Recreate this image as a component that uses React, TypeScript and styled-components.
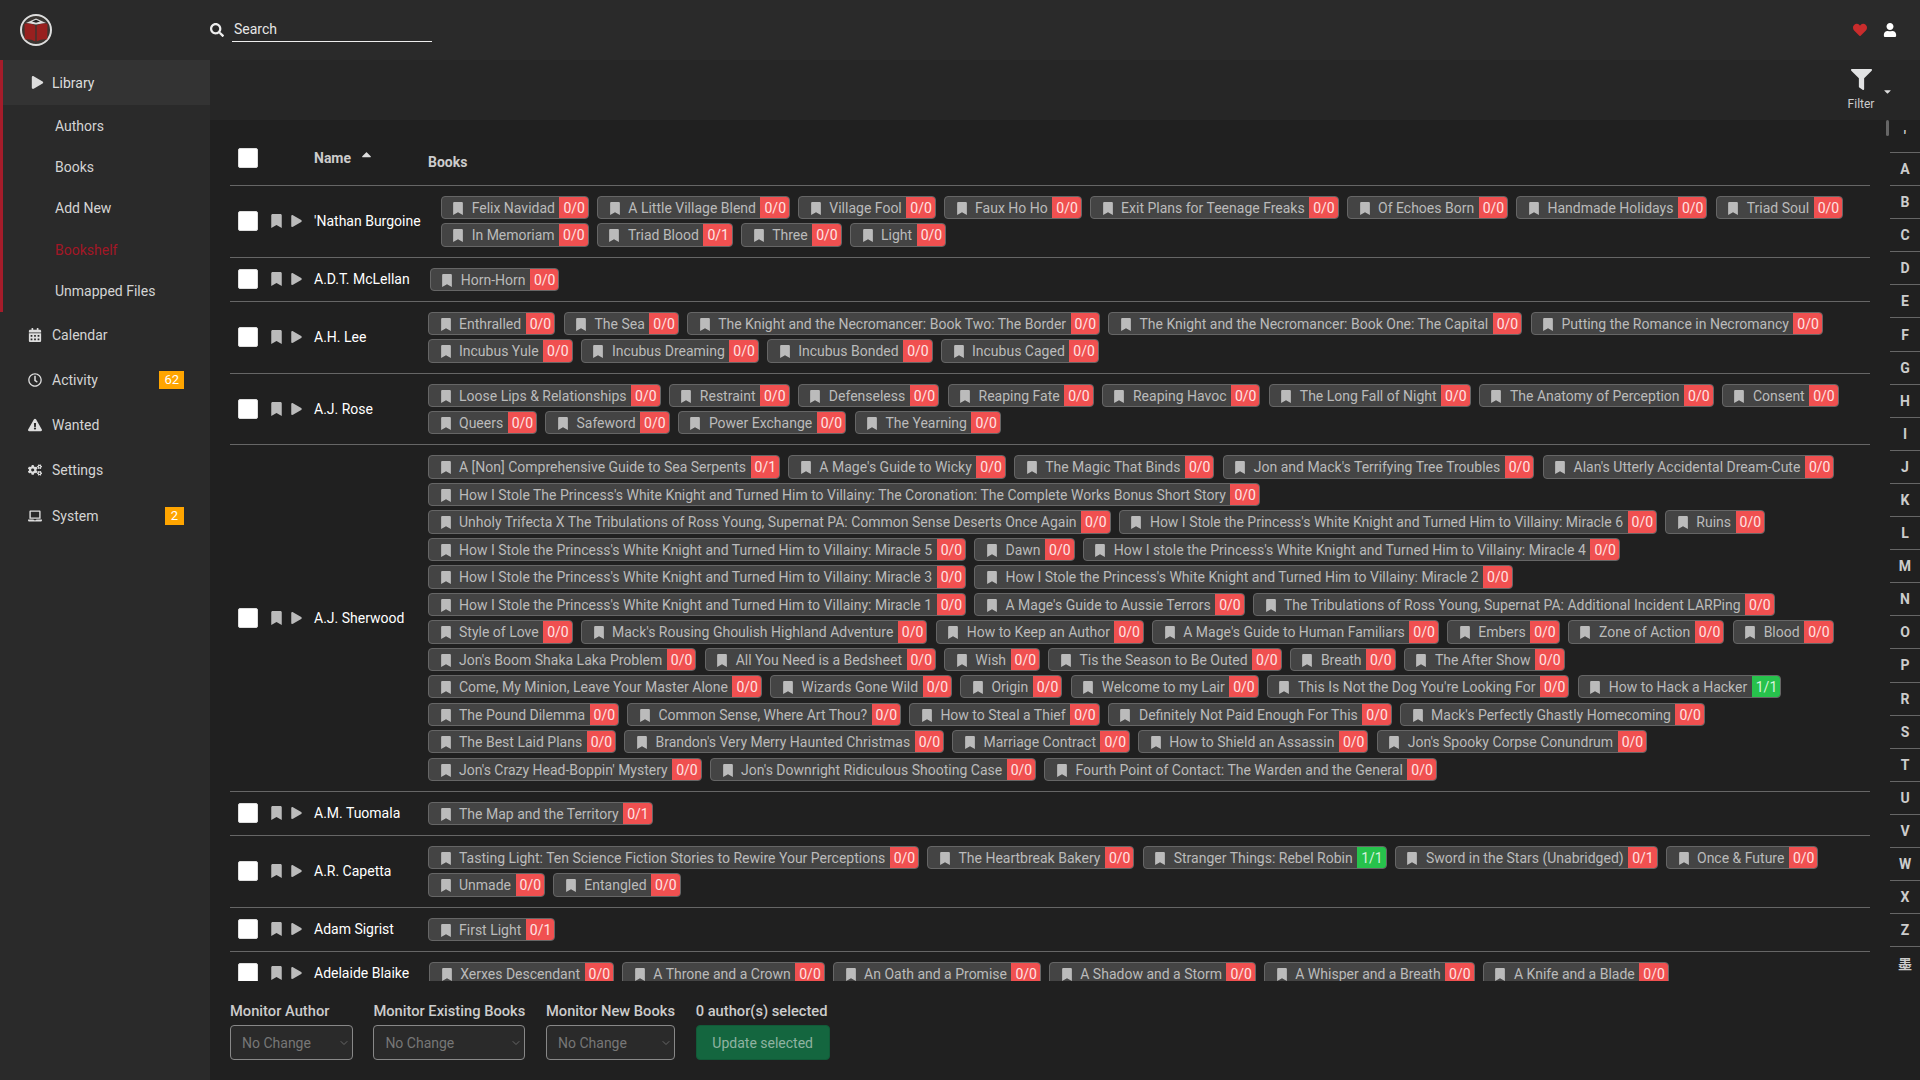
import React from 'react';
import styled, { createGlobalStyle } from 'styled-components';
import {
  FaBookmark, FaPlay, FaCalendarAlt, FaRegClock, FaExclamationTriangle, FaCogs, FaLaptop,
  FaSearch, FaHeart, FaUser, FaFilter, FaCaretDown, FaCaretUp,
} from 'react-icons/fa';
import { ChevronDown } from 'lucide-react';

const GlobalStyle = createGlobalStyle`
  html, body { margin: 0; padding: 0; height: 100%; background: #202020; overflow: hidden; }
  * { box-sizing: border-box; }
  body { font-family: Roboto, "Noto Sans CJK SC", sans-serif; font-size: 14px; color: #ccc; }
`;

const Page = styled.div`
  width: 1920px; height: 1080px; display: flex; flex-direction: column; overflow: hidden;
`;
const Header = styled.header`
  height: 60px; flex: none; display: flex; align-items: center; background: #2a2a2a;
`;
const LogoBox = styled.div`
  width: 210px; flex: none; padding-left: 20px; display: flex; align-items: center;
`;
const SearchBox = styled.div`
  display: flex; align-items: center; color: #eee;
`;
const SearchField = styled.div`
  width: 200px; height: 24px; margin-left: 8px; padding: 0 0 0 2px; line-height: 22px;
  border-bottom: 1px solid #eee; color: #e6e6e6; font-size: 14px;
`;
const HeaderRight = styled.div`
  margin-left: auto; padding-right: 23px; display: flex; align-items: center; gap: 16px;
`;
const HeartIcon = styled(FaHeart)` color: #c92c2c; font-size: 14px; `;
const UserIcon = styled(FaUser)` color: #fff; font-size: 14px; `;

const Body = styled.div` flex: 1; display: flex; min-height: 0; `;
const Sidebar = styled.nav`
  width: 210px; flex: none; background: #2a2a2a; display: flex; flex-direction: column;
`;
const LibraryGroup = styled.div` border-left: 3px solid #a51c2a; `;
const LibraryHead = styled.div`
  height: 45px; display: flex; align-items: center; background: #333; padding-left: 28px; color: #ddd;
`;
const SubItem = styled.div<{ $active?: boolean }>`
  height: 41.4px; display: flex; align-items: center; padding-left: 52px;
  color: ${(p) => (p.$active ? '#a31726' : '#d4d4d4')};
`;
const NavItem = styled.div`
  height: 45.25px; display: flex; align-items: center; color: #d4d4d4; padding-right: 26px;
`;
const NavIcon = styled.span`
  width: 52px; flex: none; padding-left: 26px; padding-right: 9px; display: flex; justify-content: center;
  color: #ddd;
  svg { height: 14px; width: auto; flex: none; }
`;
const LibraryIcon = styled(FaPlay)` font-size: 13px; color: #ddd; margin-right: 8px; `;
const Count = styled.span`
  margin-left: auto; height: 18px; min-width: 19px; padding: 0 5px; background: #ffa500; color: #fff;
  display: flex; align-items: center; justify-content: center; font-size: 13px;
`;

const Main = styled.main` flex: 1; min-width: 0; display: flex; flex-direction: column; `;
const Toolbar = styled.div`
  height: 60px; flex: none; background: #262626; display: flex; justify-content: flex-end;
  align-items: center; padding-right: 29px;
`;
const FilterStack = styled.div`
  width: 30px; display: flex; flex-direction: column; align-items: center; color: #ddd;
`;
const FilterIcon = styled(FaFilter)` font-size: 21px; color: #e1e2e3; `;
const FilterLabel = styled.span` font-size: 12px; line-height: 14px; margin-top: 7px; color: #ccc; white-space: nowrap; `;
const Caret = styled(FaCaretDown)` width: 7px; height: 11px; margin-left: 8px; color: #ddd; margin-top: 3px; `;

const Content = styled.div` flex: 1; min-height: 0; display: flex; `;
const TablePane = styled.div`
  position: relative; flex: 1; min-width: 0; padding: 0 20px; display: flex; flex-direction: column;
`;
const Thumb = styled.div`
  position: absolute; top: 0; right: 1.5px; width: 3px; height: 16px; background: #666; border-radius: 2px;
`;
const List = styled.div` flex: 1; min-height: 0; overflow: hidden; `;
const HeadRow = styled.div`
  height: 65px; display: flex; font-weight: 700; color: #ccc; position: relative;
`;
const HeadCheck = styled.div` width: 41px; flex: none; padding: 28px 0 0 8px; `;
const HeadSpacer = styled.div` width: 43px; flex: none; `;
const NameHead = styled.div` width: 114px; flex: none; padding-top: 30px; line-height: 16px; display: flex; `;
const SortIcon = styled(FaCaretUp)` font-size: 15px; margin: -3px 0 0 8px; color: #ddd; `;
const BooksHead = styled.div` padding-top: 34px; line-height: 16px; `;
const Row = styled.div`
  display: flex; align-items: center; border-top: 1px solid #666; padding: 10px 0 9.8px;
`;
const CheckCell = styled.div` width: 41px; flex: none; padding-left: 8px; display: flex; `;
const CheckBox = styled.span`
  width: 20px; height: 20px; background: #fff; border: 1px solid #ddd; border-radius: 2px; display: block;
`;
const ActionCell = styled.div`
  width: 43px; flex: none; display: flex; align-items: center; color: #bbb;
`;
const RowBookmark = styled(FaBookmark)` font-size: 14px; width: 11px; `;
const RowPlay = styled(FaPlay)` font-size: 12px; width: 11px; margin-left: 9px; `;
const Name = styled.div`
  flex: none; min-width: 114px; padding-right: 20px; color: #fff; white-space: nowrap; line-height: 20px;
`;
const Tags = styled.div` flex: 1; min-width: 0; display: flex; flex-wrap: wrap; gap: 4.1px 8.3px; `;
const Tag = styled.span`
  height: 23.4px; display: inline-flex; align-items: stretch; background: #444; border: 1px solid #666;
  border-radius: 4px; overflow: hidden; color: #bbb; white-space: nowrap;
`;
const TagIcon = styled(FaBookmark)` font-size: 13px; width: 10px; margin: 5px 8.5px 0 11.5px; flex: none; `;
const TagText = styled.span` line-height: 23.2px; padding-right: 4.5px; `;
const TagCount = styled.span<{ $full?: boolean }>`
  background: ${(p) => (p.$full ? '#27c24c' : '#f05050')}; color: ${(p) => (p.$full ? '#d6f3dd' : '#ffe3e3')};
  line-height: 23.2px; padding: 0 3px 0 4px;
`;

const BulkBar = styled.div`
  height: 99px; flex: none; padding-top: 20px; display: flex; gap: 20.7px;
`;
const BulkCol = styled.div<{ $min?: number }>`
  display: flex; flex-direction: column; gap: 4px; min-width: ${(p) => p.$min ?? 0}px;
`;
const BulkLabel = styled.div` font-weight: 500; font-size: 14.7px; line-height: 20px; color: #ccc; white-space: nowrap; `;
const Select = styled.div`
  height: 35px; border: 1px solid #888; border-radius: 4px; background: #2a2a2a; color: #777;
  display: flex; align-items: center; justify-content: space-between; padding: 0 2px 0 11px;
`;
const Chevron = styled(ChevronDown)` width: 12px; height: 12px; color: #666; `;
const UpdateButton = styled.div`
  height: 35px; border: 1px solid #125a38; border-radius: 4px; background: #14663f; color: #8fb3a1;
  display: flex; align-items: center; justify-content: center;
`;

const JumpBar = styled.div` width: 30px; flex: none; display: flex; flex-direction: column; `;
const JumpItem = styled.div<{ $first?: boolean }>`
  height: ${(p) => (p.$first ? '32px' : '33.1px')}; flex: none; display: flex; align-items: center; justify-content: center;
  font-weight: 700; color: #ccc; font-size: 14px;
  border-top: ${(p) => (p.$first ? 'none' : '1px solid #666')};
`;

type B = [string, string?];
const b = (...names: (string | B)[]): B[] => names.map((n) => (typeof n === 'string' ? [n] : n));

const authors: { name: string; books: B[] }[] = [
  { name: "'Nathan Burgoine", books: b('Felix Navidad', 'A Little Village Blend', 'Village Fool', 'Faux Ho Ho', 'Exit Plans for Teenage Freaks', 'Of Echoes Born', 'Handmade Holidays', 'Triad Soul', 'In Memoriam', ['Triad Blood', '0/1'], 'Three', 'Light') },
  { name: 'A.D.T. McLellan', books: b('Horn-Horn') },
  { name: 'A.H. Lee', books: b('Enthralled', 'The Sea', 'The Knight and the Necromancer: Book Two: The Border', 'The Knight and the Necromancer: Book One: The Capital', 'Putting the Romance in Necromancy', 'Incubus Yule', 'Incubus Dreaming', 'Incubus Bonded', 'Incubus Caged') },
  { name: 'A.J. Rose', books: b('Loose Lips & Relationships', 'Restraint', 'Defenseless', 'Reaping Fate', 'Reaping Havoc', 'The Long Fall of Night', 'The Anatomy of Perception', 'Consent', 'Queers', 'Safeword', 'Power Exchange', 'The Yearning') },
  { name: 'A.J. Sherwood', books: b(
    ['A [Non] Comprehensive Guide to Sea Serpents', '0/1'], "A Mage's Guide to Wicky", 'The Magic That Binds', "Jon and Mack's Terrifying Tree Troubles", "Alan's Utterly Accidental Dream-Cute",
    "How I Stole The Princess's White Knight and Turned Him to Villainy: The Coronation: The Complete Works Bonus Short Story",
    'Unholy Trifecta X The Tribulations of Ross Young, Supernat PA: Common Sense Deserts Once Again', "How I Stole the Princess's White Knight and Turned Him to Villainy: Miracle 6", 'Ruins',
    "How I Stole the Princess's White Knight and Turned Him to Villainy: Miracle 5", 'Dawn', "How I stole the Princess's White Knight and Turned Him to Villainy: Miracle 4",
    "How I Stole the Princess's White Knight and Turned Him to Villainy: Miracle 3", "How I Stole the Princess's White Knight and Turned Him to Villainy: Miracle 2",
    "How I Stole the Princess's White Knight and Turned Him to Villainy: Miracle 1", "A Mage's Guide to Aussie Terrors", 'The Tribulations of Ross Young, Supernat PA: Additional Incident LARPing',
    'Style of Love', "Mack's Rousing Ghoulish Highland Adventure", 'How to Keep an Author', "A Mage's Guide to Human Familiars", 'Embers', 'Zone of Action', 'Blood',
    "Jon's Boom Shaka Laka Problem", 'All You Need is a Bedsheet', 'Wish', 'Tis the Season to Be Outed', 'Breath', 'The After Show',
    'Come, My Minion, Leave Your Master Alone', 'Wizards Gone Wild', 'Origin', 'Welcome to my Lair', "This Is Not the Dog You're Looking For", ['How to Hack a Hacker', '1/1'],
    'The Pound Dilemma', 'Common Sense, Where Art Thou?', 'How to Steal a Thief', 'Definitely Not Paid Enough For This', "Mack's Perfectly Ghastly Homecoming",
    'The Best Laid Plans', "Brandon's Very Merry Haunted Christmas", 'Marriage Contract', 'How to Shield an Assassin', "Jon's Spooky Corpse Conundrum",
    "Jon's Crazy Head-Boppin' Mystery", "Jon's Downright Ridiculous Shooting Case", 'Fourth Point of Contact: The Warden and the General') },
  { name: 'A.M. Tuomala', books: b(['The Map and the Territory', '0/1']) },
  { name: 'A.R. Capetta', books: b('Tasting Light: Ten Science Fiction Stories to Rewire Your Perceptions', 'The Heartbreak Bakery', ['Stranger Things: Rebel Robin', '1/1'], ['Sword in the Stars (Unabridged)', '0/1'], 'Once & Future', 'Unmade', 'Entangled') },
  { name: 'Adam Sigrist', books: b(['First Light', '0/1']) },
  { name: 'Adelaide Blaike', books: b('Xerxes Descendant', 'A Throne and a Crown', 'An Oath and a Promise', 'A Shadow and a Storm', 'A Whisper and a Breath', 'A Knife and a Blade') },
];

const letters = ["'", 'A', 'B', 'C', 'D', 'E', 'F', 'G', 'H', 'I', 'J', 'K', 'L', 'M', 'N', 'O', 'P', 'R', 'S', 'T', 'U', 'V', 'W', 'X', 'Z', '墨'];

const Logo = () => (
  <svg width="32" height="32" viewBox="0 0 32 32">
    <circle cx="16" cy="16" r="15" fill="#3a3632" stroke="#ddd" strokeWidth="2" />
    <path d="M6 9 L16 4.5 L26 9 L16 10.5 Z" fill="#ddd" />
    <path d="M12 7.5 L16 5.8 L20 7.5 L16 8.8 Z" fill="#222" />
    <path d="M4.5 9.8 Q11 8.6 15.3 11.6 V27.5 Q10.5 24.6 4.8 25.4 Z" fill="#98201f" />
    <path d="M27.5 9.8 Q21 8.6 16.7 11.6 V27.5 Q21.5 24.6 27.2 25.4 Z" fill="#98201f" />
  </svg>
);

export default function App() {
  return (
    <Page>
      <GlobalStyle />
      <Header>
        <LogoBox><Logo /></LogoBox>
        <SearchBox>
          <FaSearch size={14} />
          <SearchField>Search</SearchField>
        </SearchBox>
        <HeaderRight>
          <HeartIcon />
          <UserIcon />
        </HeaderRight>
      </Header>
      <Body>
        <Sidebar>
          <LibraryGroup>
            <LibraryHead><LibraryIcon />Library</LibraryHead>
            <SubItem>Authors</SubItem>
            <SubItem>Books</SubItem>
            <SubItem>Add New</SubItem>
            <SubItem $active>Bookshelf</SubItem>
            <SubItem>Unmapped Files</SubItem>
          </LibraryGroup>
          <NavItem><NavIcon><FaCalendarAlt /></NavIcon>Calendar</NavItem>
          <NavItem><NavIcon><FaRegClock /></NavIcon>Activity<Count>62</Count></NavItem>
          <NavItem><NavIcon><FaExclamationTriangle /></NavIcon>Wanted</NavItem>
          <NavItem><NavIcon><FaCogs /></NavIcon>Settings</NavItem>
          <NavItem><NavIcon><FaLaptop /></NavIcon>System<Count>2</Count></NavItem>
        </Sidebar>
        <Main>
          <Toolbar>
            <FilterStack>
              <FilterIcon />
              <FilterLabel>Filter</FilterLabel>
            </FilterStack>
            <Caret />
          </Toolbar>
          <Content>
            <TablePane>
              <Thumb />
              <List>
                <HeadRow>
                  <HeadCheck><CheckBox /></HeadCheck>
                  <HeadSpacer />
                  <NameHead>Name<SortIcon /></NameHead>
                  <BooksHead>Books</BooksHead>
                </HeadRow>
                {authors.map((a) => (
                  <Row key={a.name}>
                    <CheckCell><CheckBox /></CheckCell>
                    <ActionCell><RowBookmark /><RowPlay /></ActionCell>
                    <Name>{a.name}</Name>
                    <Tags>
                      {a.books.map(([title, count]) => (
                        <Tag key={title}>
                          <TagIcon />
                          <TagText>{title}</TagText>
                          <TagCount $full={count === '1/1'}>{count ?? '0/0'}</TagCount>
                        </Tag>
                      ))}
                    </Tags>
                  </Row>
                ))}
              </List>
              <BulkBar>
                <BulkCol $min={122.7}>
                  <BulkLabel>Monitor Author</BulkLabel>
                  <Select>No Change<Chevron /></Select>
                </BulkCol>
                <BulkCol>
                  <BulkLabel>Monitor Existing Books</BulkLabel>
                  <Select>No Change<Chevron /></Select>
                </BulkCol>
                <BulkCol>
                  <BulkLabel>Monitor New Books</BulkLabel>
                  <Select>No Change<Chevron /></Select>
                </BulkCol>
                <BulkCol $min={134}>
                  <BulkLabel>0 author(s) selected</BulkLabel>
                  <UpdateButton>Update selected</UpdateButton>
                </BulkCol>
              </BulkBar>
            </TablePane>
            <JumpBar>
              {letters.map((l, i) => (
                <JumpItem key={l} $first={i === 0}>{l}</JumpItem>
              ))}
            </JumpBar>
          </Content>
        </Main>
      </Body>
    </Page>
  );
}
